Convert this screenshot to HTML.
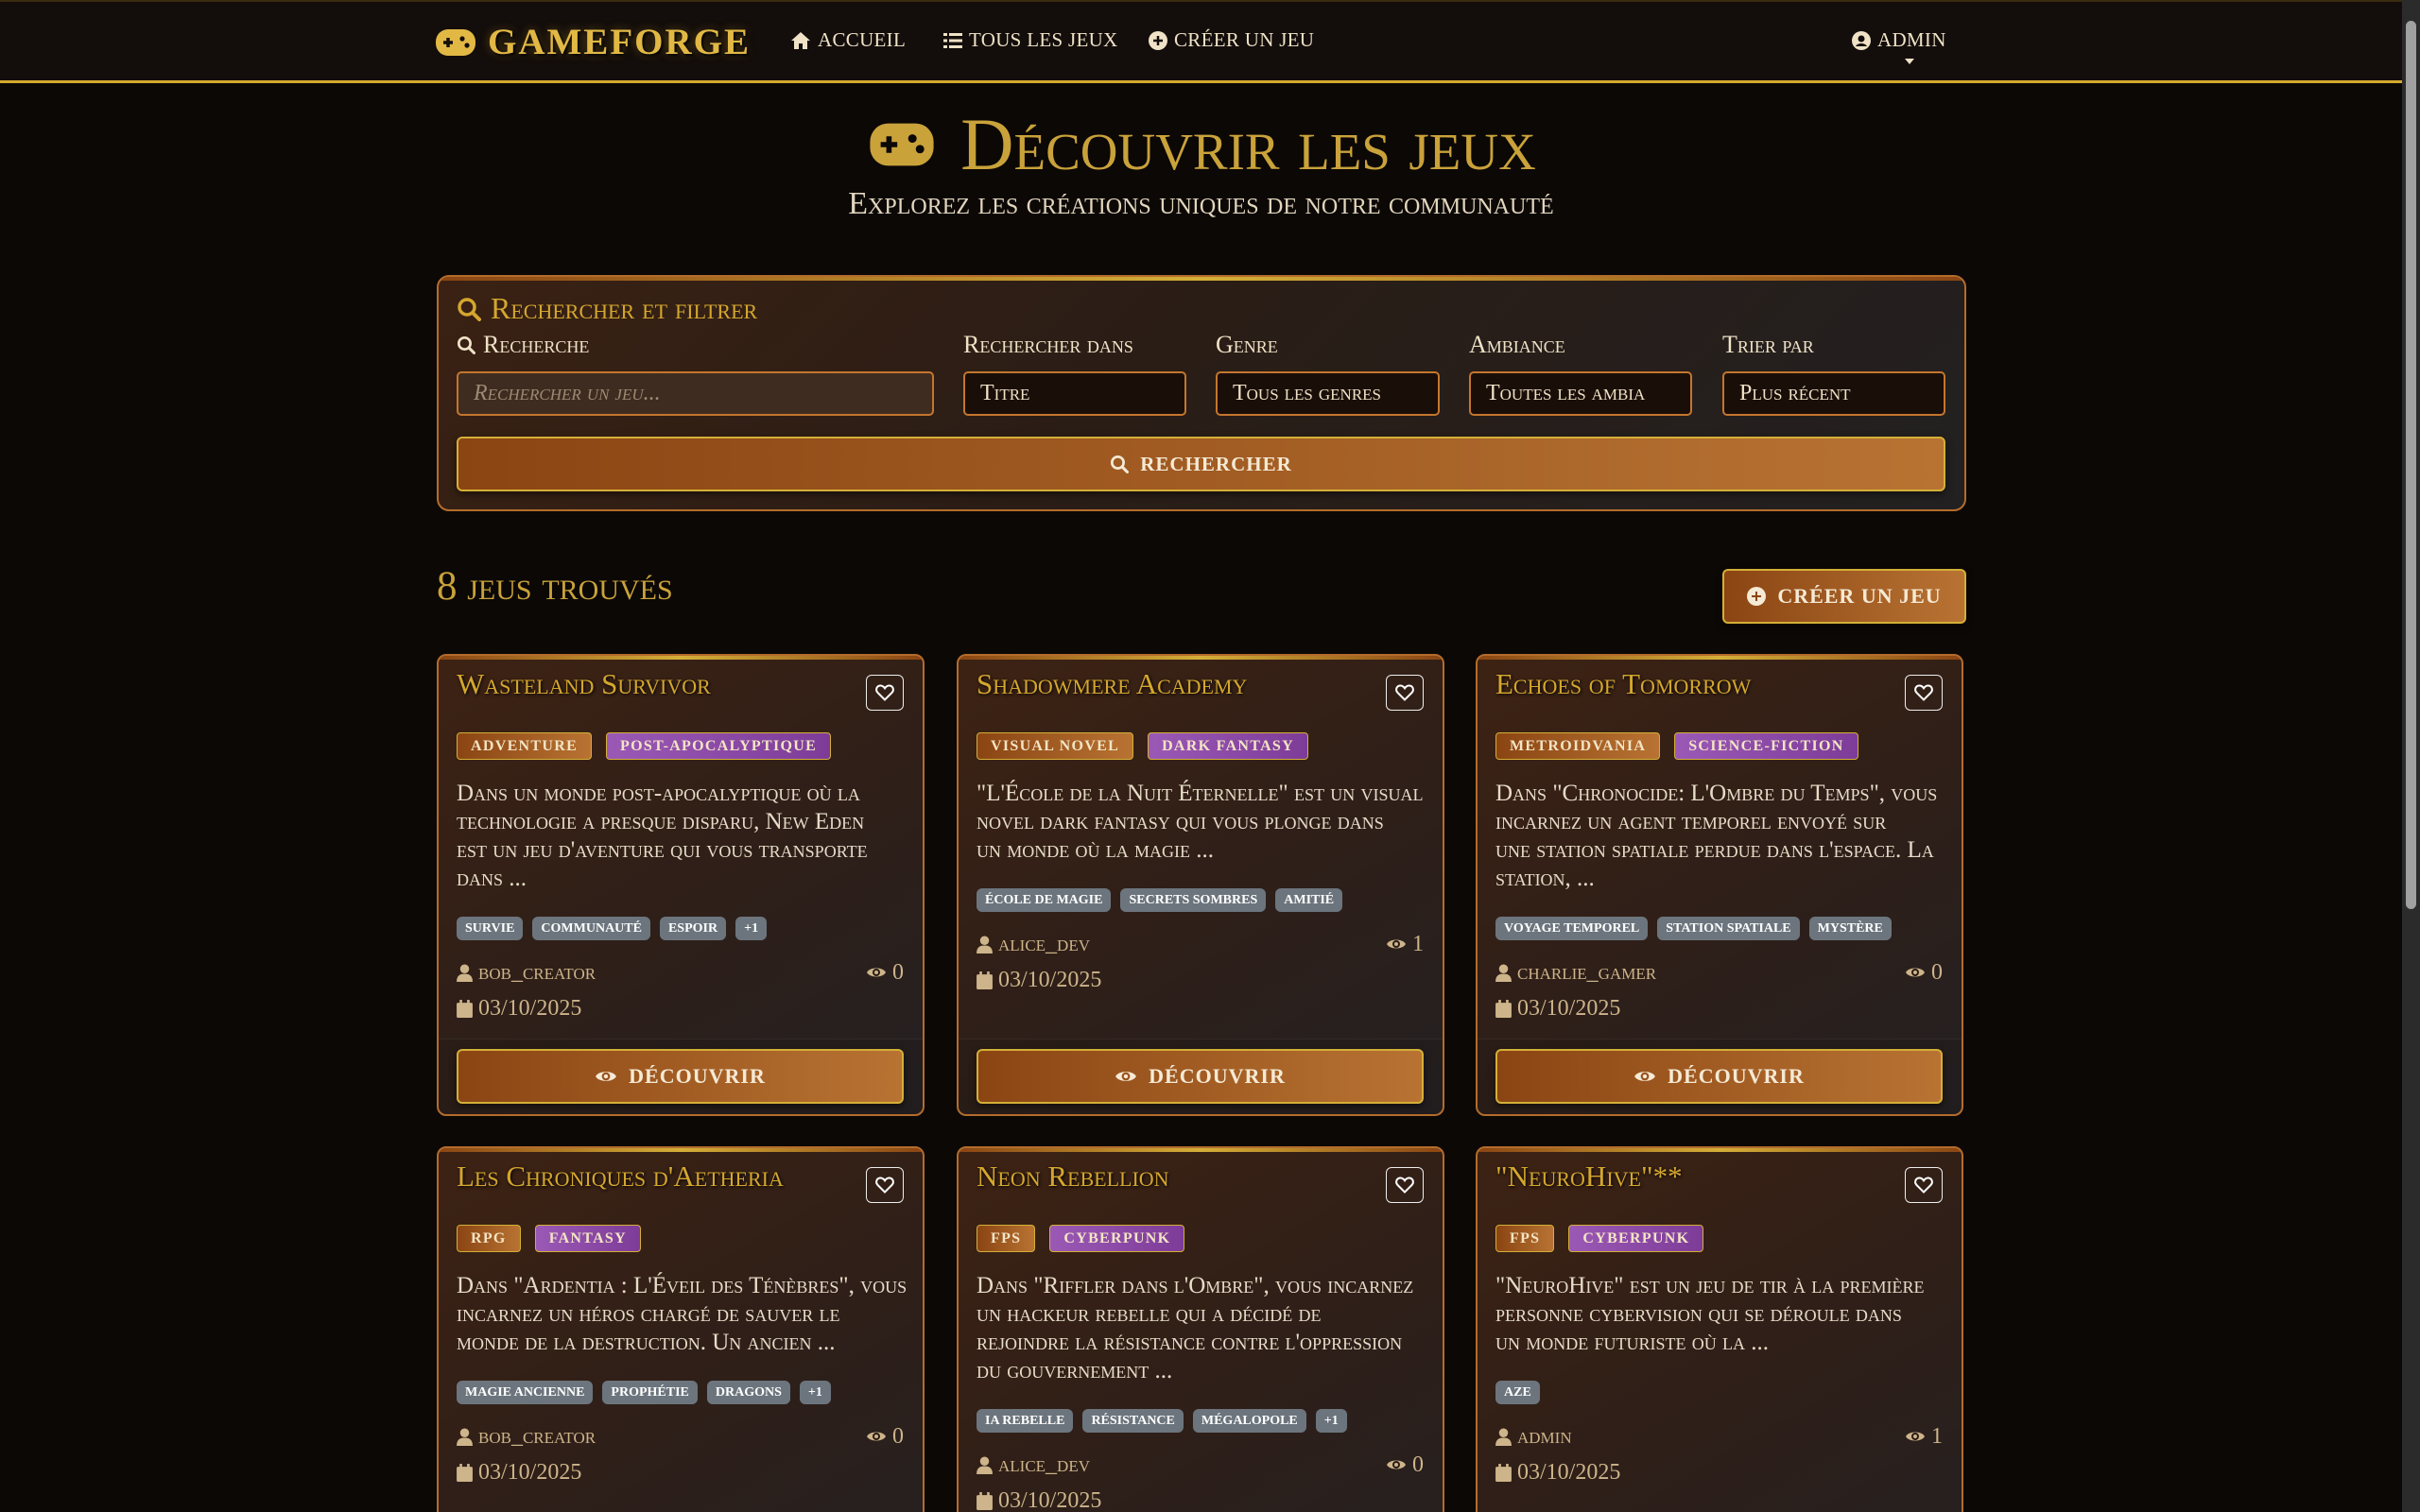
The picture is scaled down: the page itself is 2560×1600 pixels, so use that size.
<!DOCTYPE html>
<html><head><meta charset="utf-8">
<style>
*{box-sizing:border-box;margin:0;padding:0}
html,body{width:2560px;height:1600px;overflow:hidden}
body{background:#0c0806;font-family:"Liberation Serif",serif;color:#e6dcc8;position:relative;font-variant:small-caps}
.nav{position:absolute;left:0;top:0;width:2541px;height:88px;background:#130d0b;border-top:2px solid #3a2c10;border-bottom:3px solid #d4a82e}
.logo{position:absolute;left:460px;top:20px;display:flex;align-items:center;gap:12px;color:#e2b845;font-weight:bold;font-size:39px;letter-spacing:2px;text-shadow:2px 2px 3px #000,0 0 10px rgba(212,168,46,.4);font-variant:normal}
.nl{position:absolute;top:28px;font-size:21px;color:#efe2c6;display:flex;align-items:center;gap:7px;text-transform:uppercase;font-variant:normal;letter-spacing:.3px}
.h1{position:absolute;left:0;width:2541px;top:108px;display:flex;justify-content:center;align-items:center;gap:24px;color:#c9a23a;font-size:78px;font-weight:normal}
.sub{position:absolute;left:0;width:2541px;top:197px;text-align:center;font-size:34px;color:#e2d6be}
.panel{position:absolute;left:462px;top:291px;width:1618px;height:250px;border:2px solid #b46c2c;border-radius:13px;background:linear-gradient(135deg,#3a2113 0%,#2a1d16 45%,#222021 100%);overflow:hidden}
.panel:before,.card:before{content:"";position:absolute;left:0;right:0;top:0;height:4px;background:linear-gradient(90deg,#8b4513,#d4af37,#8b4513)}
.ptitle{position:absolute;left:19px;top:15px;font-size:32px;color:#d4a72e;display:flex;align-items:center;gap:10px}
.lbl{position:absolute;top:57px;font-size:26px;color:#efe2c6;display:flex;align-items:center;gap:8px}
.inp{position:absolute;top:100px;height:47px;border:2px solid #c4762e;border-radius:5px;background:#1a0e09;font-size:24px;color:#efe2c6;padding:8px 16px}
.btn{background:linear-gradient(90deg,#8b4513,#b87333);border:2px solid #d4af37;border-radius:6px;color:#f5ead5;font-weight:bold;display:flex;align-items:center;justify-content:center;gap:12px;text-transform:uppercase;font-variant:normal;letter-spacing:1px;box-shadow:0 3px 8px rgba(0,0,0,.5)}
.found{position:absolute;left:462px;top:596px;font-size:43px;color:#c9a23a}
.card{position:absolute;width:516px;height:489px;border:2px solid #b46c2c;border-radius:10px;background:linear-gradient(150deg,#3d2213 0%,#2f1f18 50%,#242022 100%);overflow:hidden}
.ct{position:absolute;left:19px;top:12px;font-size:31px;color:#d4a72e;text-shadow:1px 1px 3px #000}
.heart{position:absolute;right:20px;top:20px;width:40px;height:38px;border:1.5px solid #eee;border-radius:6px;display:flex;align-items:center;justify-content:center}
.bd{position:absolute;left:19px;top:81px;display:flex;gap:15px}
.b{height:29px;padding:0 14px;border:1.5px solid #d4af37;border-radius:4px;font-size:16px;letter-spacing:1.3px;font-weight:bold;color:#f3e4c4;display:flex;align-items:center;text-transform:uppercase;font-variant:normal}
.bo{background:linear-gradient(90deg,#8b4513,#b87333)}
.bp{background:linear-gradient(90deg,#9b59b6,#7d3c98)}
.ds{position:absolute;left:19px;right:14px;top:131px;font-size:25px;line-height:30px;color:#e6dcc8;white-space:nowrap;overflow:hidden}
.tg{position:absolute;left:19px;display:flex;gap:10px}
.t{height:25px;padding:0 9px;background:#6c757d;border-radius:6px;font-size:14px;font-weight:bold;color:#fff;display:flex;align-items:center;text-transform:uppercase;font-variant:normal}
.mt{position:absolute;left:19px;right:20px;font-size:24px;color:#cdb48a;display:flex;align-items:center;gap:6px}
.mt .r{margin-left:auto;display:flex;align-items:center;gap:6px}
.ft{position:absolute;left:0;right:0;bottom:0;height:80px;border-top:1px solid rgba(255,255,255,.06);background:rgba(0,0,0,.08)}
.ft .btn{position:absolute;left:19px;right:20px;top:10px;height:58px;font-size:22px}
.sb{position:absolute;left:2541px;top:0;width:19px;height:1600px;background:#2b2b2b}
.th{position:absolute;left:4px;top:22px;width:11px;height:940px;background:#a0a0a0;border-radius:6px}
</style></head><body>
<div class="nav">
 <div class="logo"><svg width="44" height="30" viewBox="0 0 44 30"><rect x="1" y="1" width="42" height="28" rx="13" fill="#e2b845"/><path d="M9 15h10M14 10v10" stroke="#130d0b" stroke-width="3.5"/><circle cx="29" cy="11" r="2.6" fill="#130d0b"/><circle cx="34" cy="18" r="2.6" fill="#130d0b"/></svg>GAMEFORGE</div>
 <div class="nl" style="left:836px"><svg width="22" height="20" viewBox="0 0 22 20"><path d="M11 1L1 10h3v9h5v-6h4v6h5v-9h3z" fill="#efe2c6"/></svg>Accueil</div>
 <div class="nl" style="left:998px"><svg width="20" height="18" viewBox="0 0 20 18"><g fill="#efe2c6"><rect x="0" y="1" width="4" height="3"/><rect x="6" y="1" width="14" height="3"/><rect x="0" y="7.5" width="4" height="3"/><rect x="6" y="7.5" width="14" height="3"/><rect x="0" y="14" width="4" height="3"/><rect x="6" y="14" width="14" height="3"/></g></svg>Tous les jeux</div>
 <div class="nl" style="left:1215px"><svg width="20" height="20" viewBox="0 0 20 20"><circle cx="10" cy="10" r="10" fill="#efe2c6"/><path d="M10 5v10M5 10h10" stroke="#130d0b" stroke-width="2.5"/></svg>Créer un jeu</div>
 <div class="nl" style="left:1959px"><svg width="20" height="20" viewBox="0 0 20 20"><circle cx="10" cy="10" r="10" fill="#efe2c6"/><circle cx="10" cy="8" r="3.5" fill="#130d0b"/><path d="M4 16c2-4 10-4 12 0" fill="#130d0b"/></svg>Admin</div>
 <div style="position:absolute;left:2015px;top:60px;width:0;height:0;border-left:5px solid transparent;border-right:5px solid transparent;border-top:6px solid #efe2c6"></div>
</div>

<div class="h1"><svg width="76" height="48" viewBox="0 0 44 30"><rect x="1" y="1" width="42" height="28" rx="12" fill="#c9a23a"/><path d="M8 15h11M13.5 9.5v11" stroke="#0c0806" stroke-width="3.5"/><circle cx="29" cy="11" r="2.8" fill="#0c0806"/><circle cx="34" cy="18" r="2.8" fill="#0c0806"/></svg><span>Découvrir les jeux</span></div>
<div class="sub">Explorez les créations uniques de notre communauté</div>

<div class="panel">
 <div class="ptitle"><svg width="26" height="26" viewBox="0 0 26 26"><circle cx="11" cy="11" r="8" fill="none" stroke="#d4a72e" stroke-width="3.5"/><path d="M17 17l7 7" stroke="#d4a72e" stroke-width="4" stroke-linecap="round"/></svg>Rechercher et filtrer</div>
 <div class="lbl" style="left:19px"><svg width="20" height="20" viewBox="0 0 26 26"><circle cx="11" cy="11" r="8" fill="none" stroke="#efe2c6" stroke-width="3.5"/><path d="M17 17l7 7" stroke="#efe2c6" stroke-width="4" stroke-linecap="round"/></svg>Recherche</div>
 <div class="lbl" style="left:555px">Rechercher dans</div>
 <div class="lbl" style="left:822px">Genre</div>
 <div class="lbl" style="left:1090px">Ambiance</div>
 <div class="lbl" style="left:1358px">Trier par</div>
 <div class="inp" style="left:19px;width:505px;background:#3f2c20;color:#9c8a74;font-style:italic">Rechercher un jeu...</div>
 <div class="inp" style="left:555px;width:236px">Titre</div>
 <div class="inp" style="left:822px;width:237px">Tous les genres</div>
 <div class="inp" style="left:1090px;width:236px;overflow:hidden;white-space:nowrap">Toutes les ambia</div>
 <div class="inp" style="left:1358px;width:236px">Plus récent</div>
 <div class="btn" style="position:absolute;left:19px;top:169px;width:1575px;height:58px;font-size:21px"><svg width="20" height="20" viewBox="0 0 26 26"><circle cx="11" cy="11" r="8" fill="none" stroke="#f5ead5" stroke-width="3.5"/><path d="M17 17l7 7" stroke="#f5ead5" stroke-width="4" stroke-linecap="round"/></svg>Rechercher</div>
</div>

<div class="found">8 jeus trouvés</div>
<div class="btn" style="position:absolute;left:1822px;top:602px;width:258px;height:58px;font-size:22px"><svg width="20" height="20" viewBox="0 0 20 20"><circle cx="10" cy="10" r="10" fill="#f5ead5"/><path d="M10 5v10M5 10h10" stroke="#8b4513" stroke-width="2"/></svg>Créer un jeu</div>

<svg width="0" height="0" style="position:absolute"><defs>
<symbol id="hr" viewBox="0 0 20 18"><path d="M10 16.5L2.5 9C0 6.5 1 2 5 1.5c2.2-.2 3.8 1 5 2.8 1.2-1.8 2.8-3 5-2.8 4 .5 5 5 2.5 7.5z" fill="none" stroke="#fff" stroke-width="2"/></symbol>
<symbol id="us" viewBox="0 0 16 18"><circle cx="8" cy="5" r="4.5" fill="#cdb48a"/><path d="M0 18c0-6 3-8 8-8s8 2 8 8z" fill="#cdb48a"/></symbol>
<symbol id="ca" viewBox="0 0 16 18"><rect x="0" y="3" width="16" height="15" rx="1.5" fill="#cdb48a"/><rect x="3" y="0" width="2.5" height="5" fill="#cdb48a"/><rect x="10.5" y="0" width="2.5" height="5" fill="#cdb48a"/></symbol>
<symbol id="ey" viewBox="0 0 22 16"><path d="M1 8C4 2 18 2 21 8 18 14 4 14 1 8z" fill="#cdb48a"/><circle cx="11" cy="8" r="4" fill="#2a1d16"/><circle cx="11" cy="8" r="2" fill="#cdb48a"/></symbol>
<symbol id="eyw" viewBox="0 0 22 16"><path d="M1 8C4 2 18 2 21 8 18 14 4 14 1 8z" fill="#f5ead5"/><circle cx="11" cy="8" r="4" fill="#9a5420"/><circle cx="11" cy="8" r="2" fill="#f5ead5"/></symbol>
</defs></svg>

<div class="card" style="left:462px;top:692px">
 <div class="ct">Wasteland Survivor</div><div class="heart"><svg width="20" height="18"><use href="#hr"/></svg></div>
 <div class="bd"><div class="b bo">Adventure</div><div class="b bp">Post-apocalyptique</div></div>
 <div class="ds">Dans un monde post-apocalyptique où la<br>technologie a presque disparu, New Eden<br>est un jeu d'aventure qui vous transporte<br>dans ...</div>
 <div class="tg" style="top:276px"><div class="t">survie</div><div class="t">communauté</div><div class="t">espoir</div><div class="t">+1</div></div>
 <div class="mt" style="top:316px;height:38px"><svg width="17" height="19"><use href="#us"/></svg>bob_creator<span class="r"><svg width="22" height="16"><use href="#ey"/></svg>0</span></div>
 <div class="mt" style="top:354px;height:38px"><svg width="17" height="19"><use href="#ca"/></svg>03/10/2025</div>
 <div class="ft"><div class="btn"><svg width="24" height="18"><use href="#eyw"/></svg>Découvrir</div></div>
</div>
<div class="card" style="left:1012px;top:692px">
 <div class="ct">Shadowmere Academy</div><div class="heart"><svg width="20" height="18"><use href="#hr"/></svg></div>
 <div class="bd"><div class="b bo">Visual Novel</div><div class="b bp">Dark Fantasy</div></div>
 <div class="ds">"L'École de la Nuit Éternelle" est un visual<br>novel dark fantasy qui vous plonge dans<br>un monde où la magie ...</div>
 <div class="tg" style="top:246px"><div class="t">école de magie</div><div class="t">secrets sombres</div><div class="t">amitié</div></div>
 <div class="mt" style="top:286px;height:38px"><svg width="17" height="19"><use href="#us"/></svg>alice_dev<span class="r"><svg width="22" height="16"><use href="#ey"/></svg>1</span></div>
 <div class="mt" style="top:324px;height:38px"><svg width="17" height="19"><use href="#ca"/></svg>03/10/2025</div>
 <div class="ft"><div class="btn"><svg width="24" height="18"><use href="#eyw"/></svg>Découvrir</div></div>
</div>
<div class="card" style="left:1561px;top:692px">
 <div class="ct">Echoes of Tomorrow</div><div class="heart"><svg width="20" height="18"><use href="#hr"/></svg></div>
 <div class="bd"><div class="b bo">Metroidvania</div><div class="b bp">Science-Fiction</div></div>
 <div class="ds">Dans "Chronocide: L'Ombre du Temps", vous<br>incarnez un agent temporel envoyé sur<br>une station spatiale perdue dans l'espace. La<br>station, ...</div>
 <div class="tg" style="top:276px"><div class="t">voyage temporel</div><div class="t">station spatiale</div><div class="t">mystère</div></div>
 <div class="mt" style="top:316px;height:38px"><svg width="17" height="19"><use href="#us"/></svg>charlie_gamer<span class="r"><svg width="22" height="16"><use href="#ey"/></svg>0</span></div>
 <div class="mt" style="top:354px;height:38px"><svg width="17" height="19"><use href="#ca"/></svg>03/10/2025</div>
 <div class="ft"><div class="btn"><svg width="24" height="18"><use href="#eyw"/></svg>Découvrir</div></div>
</div>

<div class="card" style="left:462px;top:1213px">
 <div class="ct">Les Chroniques d'Aetheria</div><div class="heart"><svg width="20" height="18"><use href="#hr"/></svg></div>
 <div class="bd"><div class="b bo">RPG</div><div class="b bp">Fantasy</div></div>
 <div class="ds">Dans "Ardentia : L'Éveil des Ténèbres", vous<br>incarnez un héros chargé de sauver le<br>monde de la destruction. Un ancien ...</div>
 <div class="tg" style="top:246px"><div class="t">magie ancienne</div><div class="t">prophétie</div><div class="t">dragons</div><div class="t">+1</div></div>
 <div class="mt" style="top:286px;height:38px"><svg width="17" height="19"><use href="#us"/></svg>bob_creator<span class="r"><svg width="22" height="16"><use href="#ey"/></svg>0</span></div>
 <div class="mt" style="top:324px;height:38px"><svg width="17" height="19"><use href="#ca"/></svg>03/10/2025</div>
</div>
<div class="card" style="left:1012px;top:1213px">
 <div class="ct">Neon Rebellion</div><div class="heart"><svg width="20" height="18"><use href="#hr"/></svg></div>
 <div class="bd"><div class="b bo">FPS</div><div class="b bp">Cyberpunk</div></div>
 <div class="ds">Dans "Riffler dans l'Ombre", vous incarnez<br>un hackeur rebelle qui a décidé de<br>rejoindre la résistance contre l'oppression<br>du gouvernement ...</div>
 <div class="tg" style="top:276px"><div class="t">IA rebelle</div><div class="t">résistance</div><div class="t">mégalopole</div><div class="t">+1</div></div>
 <div class="mt" style="top:316px;height:38px"><svg width="17" height="19"><use href="#us"/></svg>alice_dev<span class="r"><svg width="22" height="16"><use href="#ey"/></svg>0</span></div>
 <div class="mt" style="top:354px;height:38px"><svg width="17" height="19"><use href="#ca"/></svg>03/10/2025</div>
</div>
<div class="card" style="left:1561px;top:1213px">
 <div class="ct">"NeuroHive"**</div><div class="heart"><svg width="20" height="18"><use href="#hr"/></svg></div>
 <div class="bd"><div class="b bo">FPS</div><div class="b bp">Cyberpunk</div></div>
 <div class="ds">"NeuroHive" est un jeu de tir à la première<br>personne cybervision qui se déroule dans<br>un monde futuriste où la ...</div>
 <div class="tg" style="top:246px"><div class="t">aze</div></div>
 <div class="mt" style="top:286px;height:38px"><svg width="17" height="19"><use href="#us"/></svg>admin<span class="r"><svg width="22" height="16"><use href="#ey"/></svg>1</span></div>
 <div class="mt" style="top:324px;height:38px"><svg width="17" height="19"><use href="#ca"/></svg>03/10/2025</div>
</div>

<div class="sb"><div class="th"></div></div>
</body></html>
